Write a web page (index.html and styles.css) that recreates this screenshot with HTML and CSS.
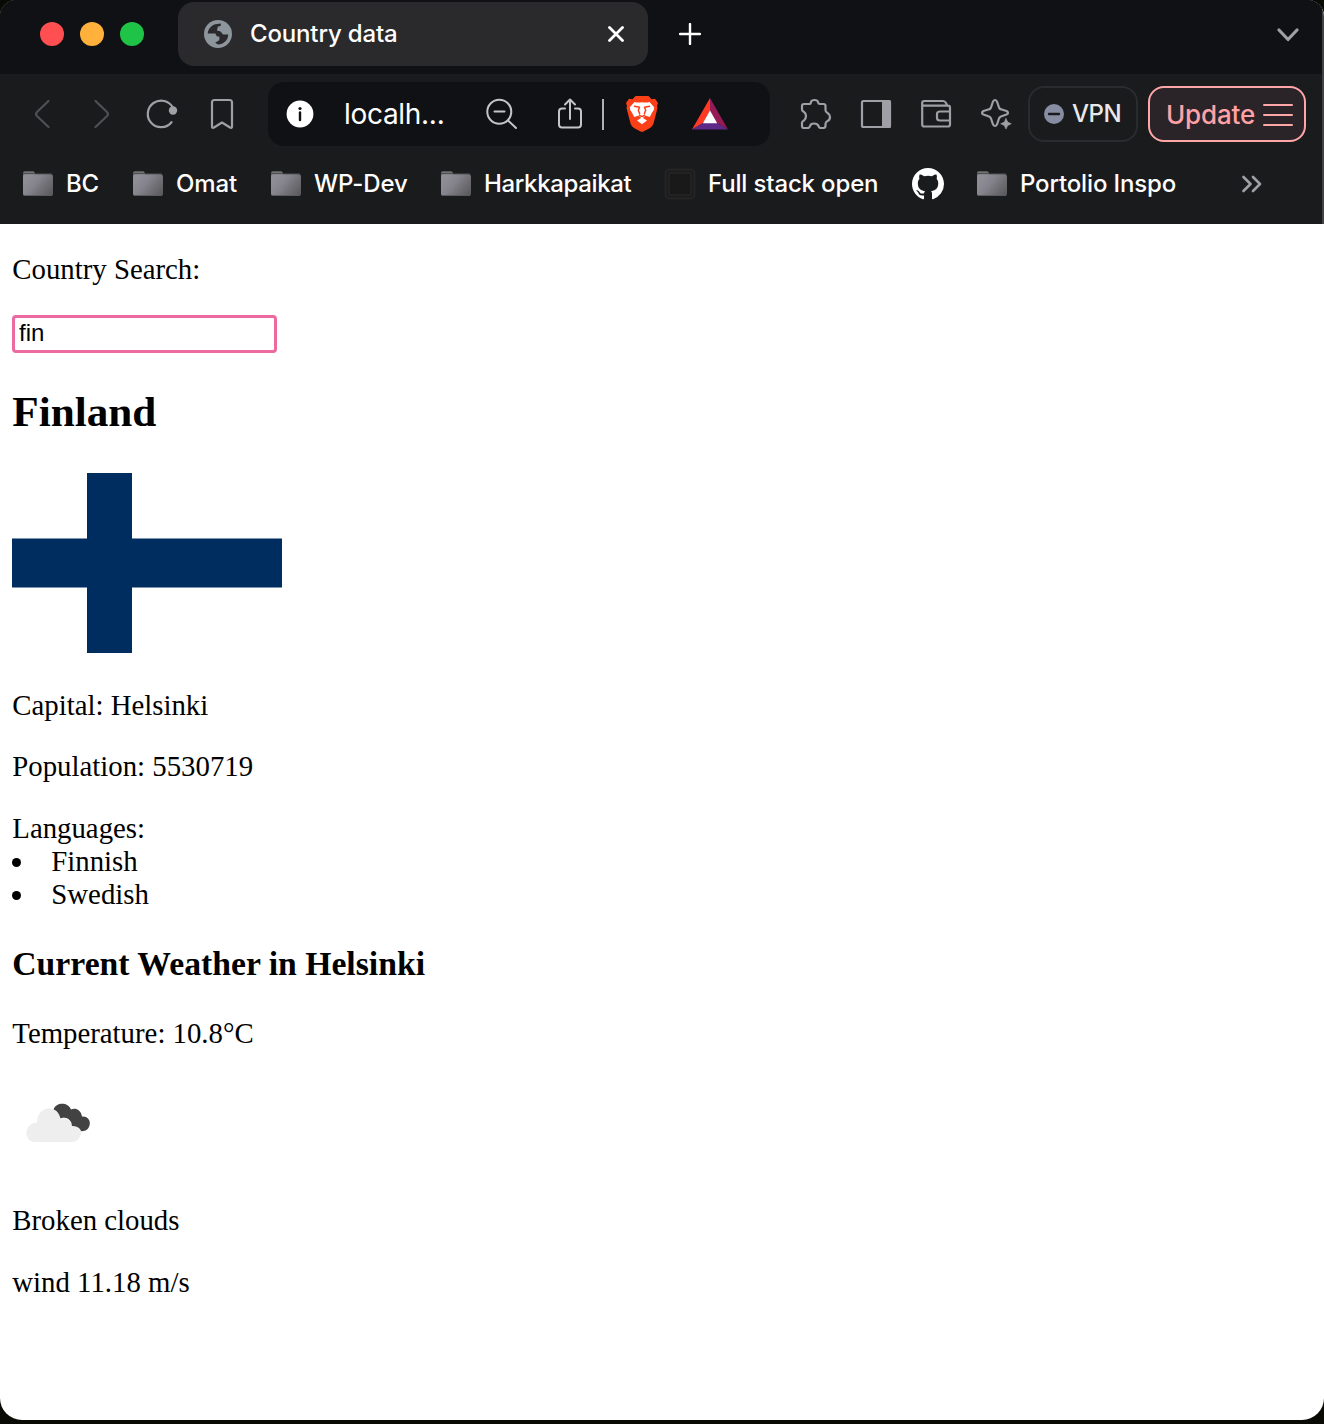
FILE: index.html
```html
<!DOCTYPE html>
<html lang="en">
<head>
<meta charset="utf-8">
<title>Country data</title>
<link rel="stylesheet" href="styles.css">
</head>
<body>
<svg class="defs" width="0" height="0" aria-hidden="true">
  <defs>
    <linearGradient id="folderFill" x1="0" y1="0.2" x2="1" y2="0.8">
      <stop offset="0.1" stop-color="#8f8d96"/><stop offset="0.4" stop-color="#85838c"/><stop offset="1" stop-color="#5c5b5d"/>
    </linearGradient>
    <symbol id="folder" viewBox="0 0 30 26">
      <path d="M0 6V2Q0 .3 1.8.3H10Q11.5.3 12 2.5V6z" fill="#717172"/>
      <path d="M.5 2.8H28.5" stroke="#454547" stroke-width="1"/>
      <rect x="0" y="3.3" width="30" height="21.7" rx="2.2" fill="url(#folderFill)"/>
      <path d="M1.5 24.5H28.5" stroke="#5b5b5e"/>
    </symbol>
  </defs>
</svg>
<div class="window">
  <header class="chrome">
    <div class="tabstrip">
      <div class="lights"><i class="light red"></i><i class="light amber"></i><i class="light green"></i></div>
      <div class="tab">
        <svg class="globe" viewBox="0 0 28 28"><circle cx="14" cy="14" r="14" fill="#8d959d"/><path d="M3.7 13.5C4.2 8.8 7.5 5.2 11.2 4.2L16.8 3.5V5.8L13.8 6.8L12.9 10.6L16.6 11.6L19 14.6H24.2C24.2 20.4 19.5 24.6 13.9 24.5L11.2 22.8L15.2 20.2L15.5 16.8L12.7 16.3L11.4 13.5z" fill="#2a2a2c"/></svg>
        <span class="tab-title">Country data</span>
        <svg class="close" viewBox="0 0 16 16"><path d="M1.5 1.5 14.5 14.5M14.5 1.5 1.5 14.5"/></svg>
      </div>
      <svg class="newtab" viewBox="0 0 22 22"><path d="M11 1V21M1 11H21"/></svg>
      <svg class="chevron" viewBox="0 0 22 14"><path d="M2 2 11 11.5 20 2"/></svg>
    </div>
    <div class="toolbar">
      <svg class="tool dim" viewBox="0 0 60 64"><path d="M36.5 19 25 30Q23 32 25 34L36.5 45"/></svg>
      <svg class="tool dim" viewBox="0 0 60 64"><path d="M23.5 19 35 30Q37 32 35 34L23.5 45"/></svg>
      <svg class="tool" viewBox="0 0 60 64"><path d="M39.5 40.2A13.3 13.3 0 1 1 41 26"/><circle cx="41" cy="28.5" r="4.2" fill="#a09fa5" stroke="none"/></svg>
      <svg class="tool" viewBox="0 0 60 64"><path d="M20 44.5V20.5Q20 18 22.5 18H37.5Q40 18 40 20.5V44.5Q40 46.5 38 45.5L30 40.5 22 45.5Q20 46.5 20 44.5z"/></svg>
      <div class="urlbar">
        <svg class="info" viewBox="0 0 28 28"><circle cx="14" cy="14" r="13.4" fill="#fff"/><circle cx="14" cy="8.5" r="1.6" fill="#101115"/><path d="M14 12.5V20" stroke="#101115" stroke-width="2.4" fill="none"/></svg>
        <span class="host">localh...</span>
        <svg class="zoomout" viewBox="0 0 32 32"><circle cx="13.3" cy="13.8" r="12"/><path d="M8.5 13.5H18.5M22 22.5 30 30"/></svg>
        <svg class="share" viewBox="0 0 26 32"><path d="M8 10.5H5Q2 10.5 2 13.5V26.5Q2 29.5 5 29.5H21Q24 29.5 24 26.5V13.5Q24 10.5 21 10.5H18M13 21V1.5M8 6.5 13 1.5 18 6.5"/></svg>
        <i class="divider"></i>
        <svg class="lion" viewBox="0 0 32 36">
          <path d="M9.5 0H22.5L25.5 3.2 29 2.7 32 7 31 10 31.5 12 27.5 27.5Q26.8 30 24 32L17.5 35.6Q16 36.4 14.5 35.6L8 32Q5.2 30 4.5 27.5L.5 12 1 10 0 7 3 2.7 6.5 3.2z" fill="#fb3f17"/>
          <path d="M8.5 6Q12 7 16 6.3 20 7 23.5 6L28.2 11.3Q28.5 14 25.8 17L23.8 21 19.8 19.8 17.3 21.3V22.3L21 24.5 16 28.3 11 24.5 14.7 22.3V21.3L12.2 19.8 8.2 21 6.2 17Q3.5 14 3.8 11.3z" fill="#fff"/>
          <path d="M8.5 10.3 13.5 11.3 12.3 14.2 13.6 17.5M23.5 10.3 18.5 11.3 19.7 14.2 18.4 17.5M13.3 19.3 16 20.6 18.7 19.3" fill="none" stroke="#fb3f17" stroke-width="1.5"/>
        </svg>
        <svg class="bat" viewBox="0 0 36 32"><path d="M18 0V13L11 25 0 31.5z" fill="#ff3b26"/><path d="M18 0 36 31.5 25 25 18 13z" fill="#951b57"/><path d="M0 31.5 11 25H25L36 31.5z" fill="#5e2a88"/><path d="M18 12.5 25.2 25.2H10.8z" fill="#fff"/></svg>
      </div>
      <svg class="tool" viewBox="0 0 60 64"><path d="M18 22H23Q25 22 25 20 25.5 18 28.5 18 31.5 18 32 20 32.2 22 34 22H37.5Q39.5 22 39.5 24V28Q39.5 30 41.5 31 44 32.5 44 35 44 38 41.5 39 39.5 40 39.5 42V43.5Q39.5 46 37.5 46H35Q33 46 32.5 44 31.5 41.5 28 41.5 24.5 41.5 24 44 23.5 46 21.5 46H18Q16 46 16 44V40.5Q16 39.5 18 38.5 20 36.5 20 34 20 31.5 18 30 16 29 16 27.5V24Q16 22 18 22z"/></svg>
      <svg class="tool" viewBox="0 0 60 64"><rect x="16" y="19" width="28" height="26" rx="1.5"/><path d="M36 18H43.5Q45 18 45 19.5V44.5Q45 46 43.5 46H36z" fill="#a09fa5" stroke="none"/></svg>
      <svg class="tool" viewBox="0 0 60 64"><path d="M16.2 24V21Q16.2 19 18.2 19H37Q39 19 40 21L41.5 23.7M16.2 23.7H42Q44 23.7 44 25.7V42.5Q44 44.5 42 44.5H18.2Q16.2 44.5 16.2 42.5V23M44 29.5H34Q31 29.5 31 32V36Q31 38.5 34 38.5H44"/></svg>
      <svg class="tool" viewBox="0 0 60 64"><path d="M27 19.5Q29 16.5 31 19.5L33 25.5Q33.6 27 35 27.3L40.5 29Q43.5 31 40.5 32.5L35 34.5Q33.6 35 33 36.5L31 42.5Q29 45.5 27 42.5L25 36.5Q24.4 35 23 34.5L17.5 32.5Q14.5 31 17.5 29L23 27.3Q24.4 27 25 25.5z"/><path d="M40 36.5 41.7 40.1 45.3 41.8 41.7 43.5 40 47.1 38.3 43.5 34.7 41.8 38.3 40.1z" fill="#a09fa5" stroke="#a09fa5" stroke-width=".6"/></svg>
      <div class="vpn"><svg class="vpn-dot" viewBox="0 0 20 20"><circle cx="10" cy="10" r="10" fill="#878da3"/><path d="M5 10H15" stroke="#1a1b1d" stroke-width="2.4" stroke-linecap="round"/></svg><span class="vpn-label">VPN</span></div>
      <div class="update"><span>Update</span><svg class="menu" viewBox="0 0 30 24"><path d="M1 2H29M1 12H29M1 22H29"/></svg></div>
    </div>
    <nav class="bookmarks">
      <a class="mark"><svg class="folder"><use href="#folder"/></svg><span>BC</span></a>
      <a class="mark"><svg class="folder"><use href="#folder"/></svg><span>Omat</span></a>
      <a class="mark"><svg class="folder"><use href="#folder"/></svg><span>WP-Dev</span></a>
      <a class="mark"><svg class="folder"><use href="#folder"/></svg><span class="snug">Harkkapaikat</span></a>
      <a class="mark"><svg class="square" viewBox="0 0 32 32"><rect x="1.5" y="1.5" width="29" height="29" rx="4" fill="#1c1c1d" stroke="#252526" stroke-width="2"/><rect x="5" y="5" width="22" height="22" rx="2" fill="#19191a" stroke="#222223" stroke-width="2"/></svg><span>Full stack open</span></a>
      <a class="mark"><svg class="github" viewBox="0 0 16 16"><path fill="#fff" d="M8 0C3.58 0 0 3.58 0 8c0 3.54 2.29 6.53 5.47 7.59.4.07.55-.17.55-.38 0-.19-.01-.82-.01-1.49-2.01.37-2.53-.49-2.69-.94-.09-.23-.48-.94-.82-1.13-.28-.15-.68-.52-.01-.53.63-.01 1.08.58 1.23.82.72 1.21 1.87.87 2.33.66.07-.52.28-.87.51-1.07-1.78-.2-3.64-.89-3.64-3.95 0-.87.31-1.59.82-2.15-.08-.2-.36-1.02.08-2.12 0 0 .67-.21 2.2.82.64-.18 1.32-.27 2-.27.68 0 1.36.09 2 .27 1.53-1.04 2.2-.82 2.2-.82.44 1.1.16 1.92.08 2.12.51.56.82 1.27.82 2.15 0 3.07-1.87 3.75-3.65 3.95.29.25.54.73.54 1.48 0 1.07-.01 1.93-.01 2.2 0 .21.15.46.55.38A8.013 8.013 0 0016 8c0-4.42-3.58-8-8-8z"/></svg></a>
      <a class="mark"><svg class="folder"><use href="#folder"/></svg><span>Portolio Inspo</span></a>
      <a class="mark"><svg class="more" viewBox="0 0 20 18"><path d="M1.5 2 8.5 9 1.5 16M11 2 18 9 11 16"/></svg></a>
    </nav>
  </header>
  <main class="page">
    <p>Country Search:</p>
    <input class="search" type="text" value="fin">
    <h2>Finland</h2>
    <svg class="flag" viewBox="0 0 270 180"><path fill="#fff" d="M0 0H270V180H0z"/><path fill="#002d5f" d="M75 0H120V65.5H270V114.5H120V180H75V114.5H0V65.5H75z"/></svg>
    <p>Capital: Helsinki</p>
    <p>Population: 5530719</p>
    <div class="languages">Languages:
      <ul><li>Finnish</li><li>Swedish</li></ul>
    </div>
    <h3>Current Weather in Helsinki</h3>
    <p>Temperature: 10.8°C</p>
    <svg class="weather" viewBox="0 0 90 90">
      <path fill="#424243" d="M41.5 31.5C44 24 56 23.5 59 31.5 63 29.5 69 31.5 70 38.5 76 38 79 43 77.5 47.5 76 54 68 54.5 65 51 61 50.5 59 48 59.5 45 57 40 52 38.5 47.5 41 46 36 45 34 41.5 31.5z"/>
      <path fill="#eeeeef" d="M22 64C11 63 12 45 25 44.5 25 35 31 30.5 37 30.5 43 30.5 47 34 48.5 40.5 55 38 60 43 59.5 48 66 47.5 72 52 68 58.5 66.5 62.5 63 64 59 64z"/>
    </svg>
    <p>Broken clouds</p>
    <p>wind 11.18 m/s</p>
  </main>
</div>
</body>
</html>
```
FILE: styles.css
```css
* { box-sizing: border-box; }
html { background: #0a0a05; }
body { margin: 0; width: 1324px; height: 1424px; overflow: hidden; background: #0a0a05; }
svg { display: block; flex: none; }
.defs { position: absolute; }

.window { height: 1420px; background: #fff; border-radius: 16px 16px 22px 22px; overflow: hidden; display: flex; flex-direction: column; }
.chrome { height: 224px; flex: none; background: #1a1b1d; border-right: 2px solid #424345; border-top-right-radius: 16px; color: #fff; font-family: Inter, "Liberation Sans", sans-serif; font-size: 24px; font-weight: 450; }
.chrome svg { fill: none; stroke-linecap: round; stroke-linejoin: round; }

.tabstrip { height: 74px; background: #101115; display: flex; align-items: center; padding: 0 23px 6px 40px; }
.lights { display: flex; gap: 16px; }
.light { width: 24px; height: 24px; border-radius: 50%; }
.red { background: #ff4f50; }
.amber { background: #ffb13c; }
.green { background: #1fc447; }
.tab { width: 470px; height: 64px; margin-left: 34px; border-radius: 16px; background: #2a2a2c; display: flex; align-items: center; padding: 0 24px 0 26px; }
.globe { width: 28px; height: 28px; }
.tab-title { margin-left: 18px; padding-bottom: 2px; letter-spacing: -.15px; white-space: nowrap; }
.close { width: 16px; height: 16px; margin-left: auto; stroke: #fff; stroke-width: 2.8; }
.newtab { width: 22px; height: 22px; margin-left: 31px; stroke: #fff; stroke-width: 2.4; }
.chevron { width: 22px; height: 14px; margin: 1px 0 0 auto; stroke: #a09fa5; stroke-width: 3.2; }

.toolbar { height: 80px; display: flex; align-items: center; padding-left: 12px; }
.tool { width: 60px; height: 64px; stroke: #a09fa5; stroke-width: 2.2; }
.dim { stroke: #505054; }
.urlbar { width: 502px; height: 64px; margin: 0 16px; border-radius: 16px; background: #101115; display: flex; align-items: center; flex: none; padding-left: 18px; }
.info { width: 28px; height: 28px; }
.host { width: 143px; padding-left: 30px; font-size: 28px; font-weight: 400; letter-spacing: -.3px; white-space: nowrap; }
.zoomout { width: 32px; height: 32px; margin-left: 29px; stroke: #c4c5c8; stroke-width: 2; }
.share { width: 26px; height: 32px; margin-left: 39px; stroke: #c4c5c8; stroke-width: 2; }
.divider { width: 2px; height: 31px; margin-left: 19px; background: #b0b0b4; }
.lion { width: 32px; height: 36px; margin-left: 22px; }
.bat { width: 36px; height: 32px; margin: 0 0 1px 34px; }
.vpn { width: 110px; height: 56px; margin-left: 2px; flex: none; border: 2px solid #2a2b2e; border-radius: 16px; display: flex; align-items: center; padding-left: 14px; gap: 8px; color: #e8e8ea; }
.vpn-dot { width: 20px; height: 20px; }
.vpn-label { padding-bottom: 2px; letter-spacing: -.5px; }
.update { width: 158px; height: 56px; margin-left: 10px; flex: none; border: 2px solid #ffa6a9; border-radius: 16px; background: #2a2328; color: #ffa2a6; display: flex; align-items: center; justify-content: space-between; padding: 1px 11px 0 16px; font-size: 26px; letter-spacing: -.15px; }
.menu { width: 30px; height: 24px; stroke: #ffa6a9; stroke-width: 2; }

.bookmarks { height: 60px; padding-left: 23px; display: grid; grid-template-columns: 110px 138px 170px 223px 248px 65px 265px 40px; align-items: center; }
.mark { display: flex; align-items: center; white-space: nowrap; letter-spacing: -.15px; }
.mark span { padding-bottom: 2px; }
.mark .snug { letter-spacing: -.35px; }
.folder { width: 30px; height: 26px; margin-right: 13px; }
.square { width: 32px; height: 32px; margin-right: 12px; }
.github { width: 32px; height: 32px; }
.more { width: 20px; height: 18px; stroke: #a09fa5; stroke-width: 2.6; }

.page { padding-left: 12px; font: 28.8px/33px "Liberation Serif", serif; color: #000; display: flow-root; text-indent: .3px; }
.page p { margin: 28.6px 0; }
.search { display: block; width: 264.5px; height: 38px; margin: 29px 0 0; padding: 0 4px 1px; border: 3px solid #ec6a9f; border-radius: 4px; outline: none; background: #fff; color: #000; font: 24px "Liberation Sans", sans-serif; text-indent: 0; }
.page h2 { margin: 34.1px 0 36px; font-size: 43.2px; line-height: 50px; }
.flag { width: 270px; height: 180px; }
.flag + p { margin-top: 36px; }
.languages ul { margin: 0; padding: 0; list-style: none; }
.languages li { display: flex; align-items: center; }
.languages li::before { content: ""; width: 9px; height: 9px; margin: 2px 30px 0 0; border-radius: 50%; background: #000; }
.page h3 { margin: 34px 0; font-size: 33.7px; line-height: 38px; }
.weather { width: 90px; height: 90px; }
.weather + p { margin-top: 36px; }
```
